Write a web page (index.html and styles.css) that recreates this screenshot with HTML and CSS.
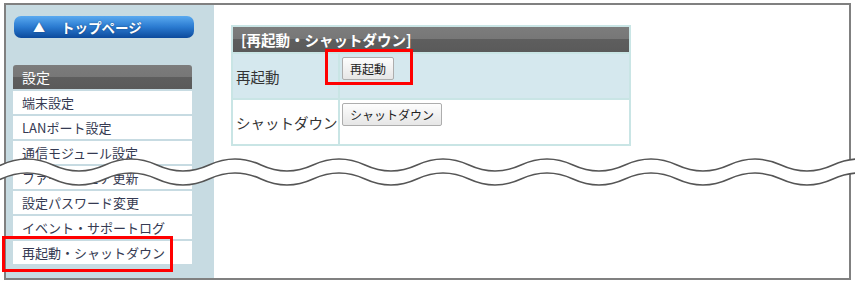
FILE: index.html
```html
<!DOCTYPE html>
<html lang="ja">
<head>
  <meta charset="UTF-8">
  <meta name="viewport" content="width=device-width, initial-scale=1.0">
  <title>再起動・シャットダウン</title>
  <link rel="stylesheet" href="styles.css">
</head>
<body>
  <!-- 画面の枠 -->
  <div class="frame">
    <!-- 左メニュー -->
    <nav class="sidebar">
      <a class="top-button"><span class="tri">▲</span>トップページ</a>
      <div class="menu-head">設定</div>
      <ul class="menu">
        <li>端末設定</li>
        <li>LANポート設定</li>
        <li>通信モジュール設定</li>
        <li>ファームウェア更新</li>
        <li>設定パスワード変更</li>
        <li>イベント・サポートログ</li>
        <li>再起動・シャットダウン</li>
      </ul>
    </nav>

    <!-- 本文 -->
    <main class="content">
      <table class="panel">
        <tr>
          <th colspan="2">[再起動・シャットダウン]</th>
        </tr>
        <tr class="row-blue">
          <td class="label">再起動</td>
          <td class="action"><button>再起動</button></td>
        </tr>
        <tr>
          <td class="label">シャットダウン</td>
          <td class="action"><button>シャットダウン</button></td>
        </tr>
      </table>
    </main>
  </div>

  <!-- 省略を示す波線 -->
  <svg class="wave" viewBox="0 0 855 40" width="855" height="40">
    <path class="wave-fill" d="M-103,15 q26,-12 52,0 t52,0 t52,0 t52,0 t52,0 t52,0 t52,0 t52,0 t52,0 t52,0 t52,0 t52,0 t52,0 t52,0 t52,0 t52,0 t52,0 t52,0 t52,0 L885,29 q-26,-12 -52,0 t-52,0 t-52,0 t-52,0 t-52,0 t-52,0 t-52,0 t-52,0 t-52,0 t-52,0 t-52,0 t-52,0 t-52,0 t-52,0 t-52,0 t-52,0 t-52,0 t-52,0 t-52,0 Z"/>
    <path class="wave-line" d="M-103,15 q26,-12 52,0 t52,0 t52,0 t52,0 t52,0 t52,0 t52,0 t52,0 t52,0 t52,0 t52,0 t52,0 t52,0 t52,0 t52,0 t52,0 t52,0 t52,0 t52,0"/>
    <path class="wave-line" d="M-103,29 q26,-12 52,0 t52,0 t52,0 t52,0 t52,0 t52,0 t52,0 t52,0 t52,0 t52,0 t52,0 t52,0 t52,0 t52,0 t52,0 t52,0 t52,0 t52,0 t52,0"/>
  </svg>

  <!-- 赤枠の注記 -->
  <div class="mark mark-menu"></div>
  <div class="mark mark-button"></div>
</body>
</html>
```

FILE: styles.css
```css
/* 全体 */
body {
  margin: 0;
  background: #fff;
  font-family: "Noto Sans CJK JP", sans-serif;
  color: #333;
  position: relative;
  width: 855px;
  height: 286px;
  overflow: hidden;
}

.frame {
  margin: 3px 0 0 4px;
  width: 843px;
  height: 273px;
  border: 2px solid #808080;
  display: flex;
}

/* 左メニュー */
.sidebar {
  width: 194px;
  padding: 11px 7px 0;
  background: #c7dbe2;
  display: flex;
  flex-direction: column;
}

.top-button {
  display: flex;
  align-items: center;
  margin-left: 1px;
  width: 180px;
  height: 22px;
  border-radius: 7px;
  background: linear-gradient(#5aaaf0, #2a7ad0 50%, #0c4a9c);
  color: #fff;
  font-size: 13.5px;
  font-weight: bold;
  text-shadow: 0 0 2px rgba(0, 0, 0, 0.4);
  box-sizing: border-box;
  padding-left: 19px;
}

.top-button .tri {
  font-size: 12px;
  margin-right: 16px;
}

.menu-head {
  margin-top: 27px;
  width: 179px;
  height: 24px;
  box-sizing: border-box;
  padding-left: 9px;
  border-radius: 3px 3px 0 0;
  background: linear-gradient(#7c7c7c, #777 50%, #5e5e5e 50%, #5a5a5a);
  color: #fff;
  font-size: 14px;
  line-height: 24px;
}

.menu {
  list-style: none;
  margin: 2px 0 0;
  padding: 0;
  width: 179px;
  display: flex;
  flex-direction: column;
  gap: 2px;
}

.menu li {
  height: 23px;
  line-height: 23px;
  padding-left: 9px;
  background: #fff;
  font-size: 13px;
  color: #353a52;
}

/* 本文 */
.content {
  flex: 1;
  padding: 20px 0 0 17px;
}

.panel {
  width: 400px;
  border-collapse: collapse;
  border: 2px solid #c9e5e5;
}

.panel th {
  height: 25px;
  padding: 0 0 0 8px;
  text-align: left;
  background: linear-gradient(#7c7c7c, #777 50%, #5e5e5e 50%, #5a5a5a);
  color: #fff;
  font-size: 14.5px;
  font-weight: bold;
}

.panel td {
  height: 41px;
  border: 2px solid #c9e5e5;
  font-size: 14.5px;
}

.row-blue td {
  background: #d5e8ee;
}

.label {
  width: 102px;
  padding: 0 0 0 3px;
  white-space: nowrap;
}

.action {
  vertical-align: top;
  padding: 3px 0 0 2px;
}

button {
  font-family: "Noto Sans CJK JP", sans-serif;
  font-size: 12px;
  color: #222;
  height: 23px;
  padding: 0 7px;
  border: 1px solid #adadad;
  border-radius: 2px;
  background: linear-gradient(#fdfdfd, #e6e6e6);
}

/* 波線 */
.wave {
  position: absolute;
  left: 0;
  top: 150px;
}

.wave-fill {
  fill: #fff;
}

.wave-line {
  fill: none;
  stroke: #555;
  stroke-width: 1.6;
}

/* 赤枠 */
.mark {
  position: absolute;
  border: 3px solid #f00;
}

.mark-menu {
  left: 2px;
  top: 236px;
  width: 165px;
  height: 30px;
}

.mark-button {
  left: 325px;
  top: 49px;
  width: 82px;
  height: 30px;
}
```
